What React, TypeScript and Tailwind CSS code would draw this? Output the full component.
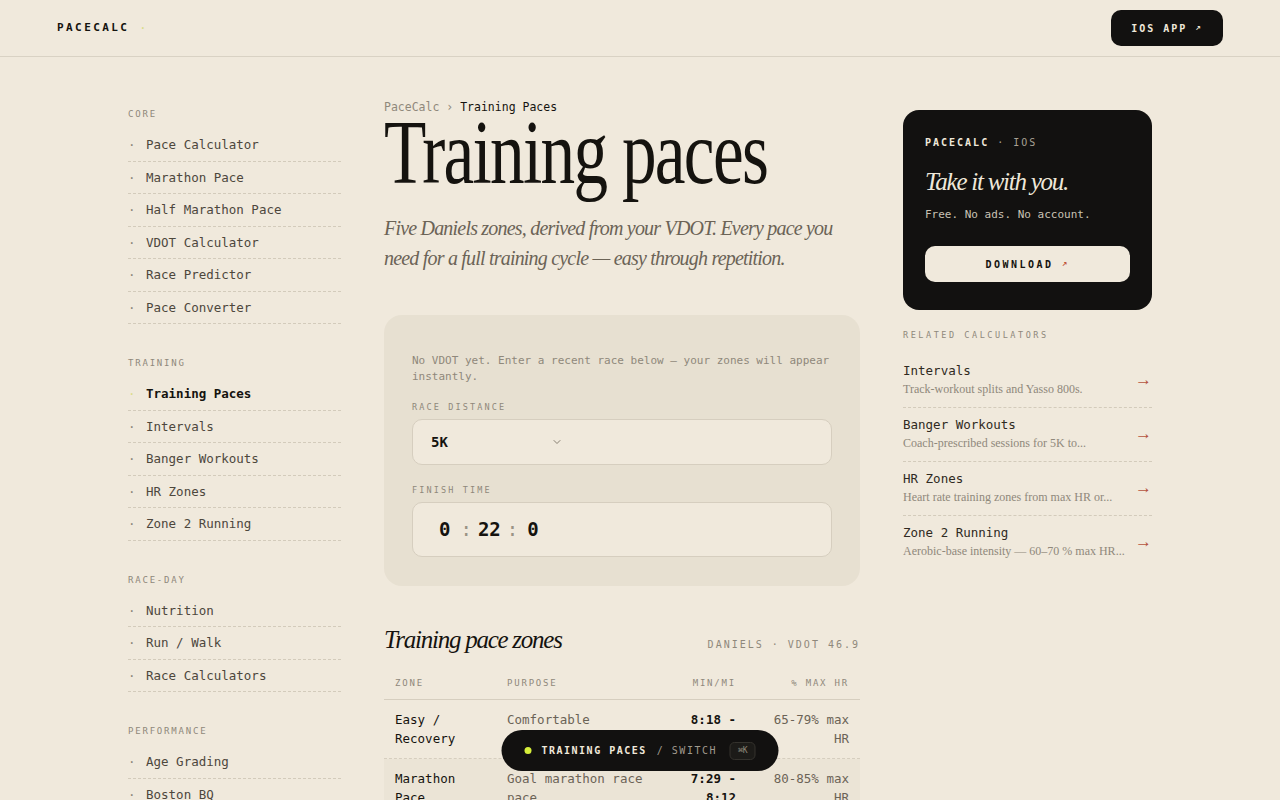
import React from 'react';
import { ChevronDown } from 'lucide-react';

const navSections = [
  {
    title: 'Core',
    items: ['Pace Calculator', 'Marathon Pace', 'Half Marathon Pace', 'VDOT Calculator', 'Race Predictor', 'Pace Converter'],
  },
  {
    title: 'Training',
    items: ['Training Paces', 'Intervals', 'Banger Workouts', 'HR Zones', 'Zone 2 Running'],
  },
  {
    title: 'Race-Day',
    items: ['Nutrition', 'Run / Walk', 'Race Calculators'],
  },
  {
    title: 'Performance',
    items: ['Age Grading', 'Boston BQ', 'Heat Adjustment', 'Elevation'],
  },
];

const zones = [
  { zone: 'Easy / Recovery', purpose: 'Comfortable conversational', pace: '8:18 - 9:10', hr: '65-79% max HR' },
  { zone: 'Marathon Pace', purpose: 'Goal marathon race pace', pace: '7:29 - 8:12', hr: '80-85% max HR' },
  { zone: 'Threshold', purpose: 'Comfortably hard tempo', pace: '7:01', hr: '88-92% max HR' },
  { zone: 'Interval', purpose: 'VO2max development', pace: '6:28', hr: '98-100% max HR' },
  { zone: 'Repetition', purpose: 'Speed and economy', pace: '6:02', hr: '—' },
];

const related = [
  { title: 'Intervals', desc: 'Track-workout splits and Yasso 800s.' },
  { title: 'Banger Workouts', desc: 'Coach-prescribed sessions for 5K to...' },
  { title: 'HR Zones', desc: 'Heart rate training zones from max HR or...' },
  { title: 'Zone 2 Running', desc: 'Aerobic-base intensity — 60–70 % max HR...' },
];

const serif = "font-['Liberation_Serif','DejaVu_Serif',serif]";

const Sidebar: React.FC = () => (
  <aside className="pt-[8px]">
    {navSections.map((section) => (
      <div key={section.title} className="mb-[33px]">
        <div className="mb-[9px] text-[9px] uppercase leading-[12px] tracking-[0.2em] text-[#8f887b]">{section.title}</div>
        <ul>
          {section.items.map((item) => {
            const active = item === 'Training Paces';
            return (
              <li
                key={item}
                className="flex items-center border-b border-dashed border-[#d3cbbb] py-[7px] text-[12.5px] leading-[17.5px]"
              >
                <span className={`w-[18px] ${active ? 'text-[#dcdc8c]' : 'text-[#8f887b]'}`}>·</span>
                <span className={active ? 'font-bold text-[#15130f]' : 'text-[#4d473c]'}>{item}</span>
              </li>
            );
          })}
        </ul>
      </div>
    ))}
  </aside>
);

const ZoneTable: React.FC = () => (
  <div>
    <div className="mt-[22px] grid grid-cols-[112px_172px_79px_113px] border-b border-[#d6cebf] pb-[10px] text-[9px] uppercase leading-[12px] tracking-[0.2em] text-[#8f887b]">
      <div className="px-[11px]">Zone</div>
      <div className="px-[11px]">Purpose</div>
      <div className="px-[11px] text-right">Min/mi</div>
      <div className="px-[11px] text-right">% max HR</div>
    </div>
    {zones.map((z, i) => (
      <div
        key={z.zone}
        className={`grid grid-cols-[112px_172px_79px_113px] border-b border-dashed border-[#d6cebf] py-[10px] text-[12.5px] leading-[19px] ${
          i % 2 === 1 ? 'bg-[#ebe4d6]' : ''
        }`}
      >
        <div className="px-[11px] text-[#15130f]">{z.zone}</div>
        <div className="px-[11px] text-[#6b6356]">{z.purpose}</div>
        <div className="px-[11px] text-right font-bold text-[#15130f]">{z.pace}</div>
        <div className="px-[11px] text-right text-[#6b6356]">{z.hr}</div>
      </div>
    ))}
  </div>
);

const MainColumn: React.FC = () => (
  <main>
    <nav className="text-[11.5px] leading-[14px] whitespace-pre">
      <span className="text-[#8f887b]">PaceCalc › </span>
      <span className="text-[#15130f]">Training Paces</span>
    </nav>

    <h1
      className={`${serif} h-[78px] origin-left scale-x-[0.77] whitespace-nowrap text-[90px] leading-[78px] tracking-[-0.025em] text-[#15130f]`}
    >
      Training paces
    </h1>

    <p className={`${serif} mt-[21px] text-[20px] italic leading-[30px] tracking-[-0.04em] text-[#6b6356]`}>
      <span className="block whitespace-nowrap">Five Daniels zones, derived from your VDOT. Every pace you</span>
      <span className="block whitespace-nowrap">need for a full training cycle — easy through repetition.</span>
    </p>

    {/* race input card */}
    <section className="mt-[42px] rounded-[18px] bg-[#e7e0d1] px-[28px] pt-[38px] pb-[29px]">
      <p className="text-[11px] leading-[16px] text-[#8f887b]">
        No VDOT yet. Enter a recent race below — your zones will appear instantly.
      </p>

      <div className="mt-[16px] text-[8.5px] uppercase leading-[12px] tracking-[0.25em] text-[#8f887b]">Race distance</div>
      <div className="mt-[6px] flex h-[46px] items-center rounded-[10px] border border-[#d6cebf] bg-[#f0e9dc] pl-[18px]">
        <span className="w-[120px] text-[14px] font-bold text-[#15130f]">5K</span>
        <ChevronDown className="h-[12px] w-[12px] text-[#6b6356]" strokeWidth={1.6} />
      </div>

      <div className="mt-[19px] text-[8.5px] uppercase leading-[12px] tracking-[0.25em] text-[#8f887b]">Finish time</div>
      <div className="mt-[6px] flex h-[55px] items-center rounded-[10px] border border-[#d6cebf] bg-[#f0e9dc] pl-[26px] text-[19px] font-bold text-[#15130f]">
        <span>0</span>
        <span className="ml-[10px] mr-[6px] font-normal text-[#9a9385]">:</span>
        <span>22</span>
        <span className="ml-[6px] mr-[9px] font-normal text-[#9a9385]">:</span>
        <span>0</span>
      </div>
    </section>

    <div className="mt-[39px] flex items-baseline justify-between">
      <h2 className={`${serif} text-[25px] italic leading-[30px] tracking-[-0.05em] text-[#15130f]`}>Training pace zones</h2>
      <span className="text-[10px] tracking-[0.2em] text-[#8f887b]">DANIELS · VDOT 46.9</span>
    </div>

    <ZoneTable />
  </main>
);

const RightColumn: React.FC = () => (
  <aside className="pt-[10px]">
    <div className="rounded-[16px] bg-[#121110] px-[22px] pt-[26px] pb-[28px]">
      <div className="text-[10px] font-bold leading-[14px] tracking-[0.2em] text-[#efe8da]">
        PACECALC <span className="font-normal text-[#a8a194]">· IOS</span>
      </div>
      <div className={`${serif} mt-[17px] text-[25px] italic leading-[30px] tracking-[-0.05em] text-[#efe8da]`}>
        Take it with you.
      </div>
      <p className="mt-[10px] text-[11px] leading-[16px] text-[#c9c2b4]">Free. No ads. No account.</p>
      <button className="mt-[23px] flex h-[36px] w-full items-center justify-center gap-[8px] rounded-[10px] bg-[#f0e9dc] text-[10px] font-bold tracking-[0.25em] text-[#15130f]">
        DOWNLOAD <span className="text-[9px] text-[#c0533a]">↗</span>
      </button>
    </div>

    <div className="mt-[19px] mb-[13px] text-[8.5px] uppercase leading-[12px] tracking-[0.3em] text-[#8f887b]">
      Related calculators
    </div>
    <ul>
      {related.map((r) => (
        <li
          key={r.title}
          className="flex items-center justify-between gap-[12px] border-b border-dashed border-[#d3cbbb] pt-[8px] pb-[10px] last:border-b-0"
        >
          <div className="min-w-0">
            <div className="text-[12.5px] leading-[17px] text-[#2f2a22]">{r.title}</div>
            <div className={`${serif} mt-[2px] whitespace-nowrap text-[12px] leading-[16px] text-[#8f887b]`}>{r.desc}</div>
          </div>
          <span className={`${serif} text-[17px] text-[#b5543f]`}>→</span>
        </li>
      ))}
    </ul>
  </aside>
);

const App: React.FC = () => {
  return (
    <div className="min-h-screen bg-[#f0e9dc] font-['DejaVu_Sans_Mono','Liberation_Mono',monospace] text-[#15130f]">
      <header className="flex h-[57px] items-center justify-between border-b border-[#d9d2c4] px-[57px]">
        <div className="flex items-center gap-[10px]">
          <span className="text-[11px] font-bold tracking-[0.22em] text-[#15130f]">PACECALC</span>
          <span className="text-[12px] text-[#d8dc8a]">·</span>
        </div>
        <button className="flex h-[36px] w-[112px] items-center justify-center gap-[8px] rounded-[10px] bg-[#121110] text-[10px] font-bold tracking-[0.2em] text-[#efe8da]">
          IOS APP <span className="text-[9px]">↗</span>
        </button>
      </header>

      <div className="mx-auto grid w-[1024px] grid-cols-[213px_476px_249px] gap-x-[43px] pt-[43px] pb-32">
        <Sidebar />
        <MainColumn />
        <RightColumn />
      </div>

      {/* quick switcher pill */}
      <div className="fixed bottom-[29px] left-1/2 flex h-[41px] w-[277px] -translate-x-1/2 items-center rounded-full bg-[#121110] pl-[23px]">
        <span className="h-[7px] w-[7px] rounded-full bg-[#d6ee3a]" />
        <span className="ml-[10px] text-[10px] font-bold tracking-[0.15em] text-[#efe8da]">TRAINING PACES</span>
        <span className="ml-[10px] text-[10px] tracking-[0.15em] text-[#a09a8e]">/ SWITCH</span>
        <span className="ml-[13px] flex h-[18px] items-center rounded-[5px] border border-[#34322d] bg-[#1c1b18] px-[7px] text-[8px] text-[#8f887b]">
          ⌘K
        </span>
      </div>
    </div>
  );
};

export default App;
